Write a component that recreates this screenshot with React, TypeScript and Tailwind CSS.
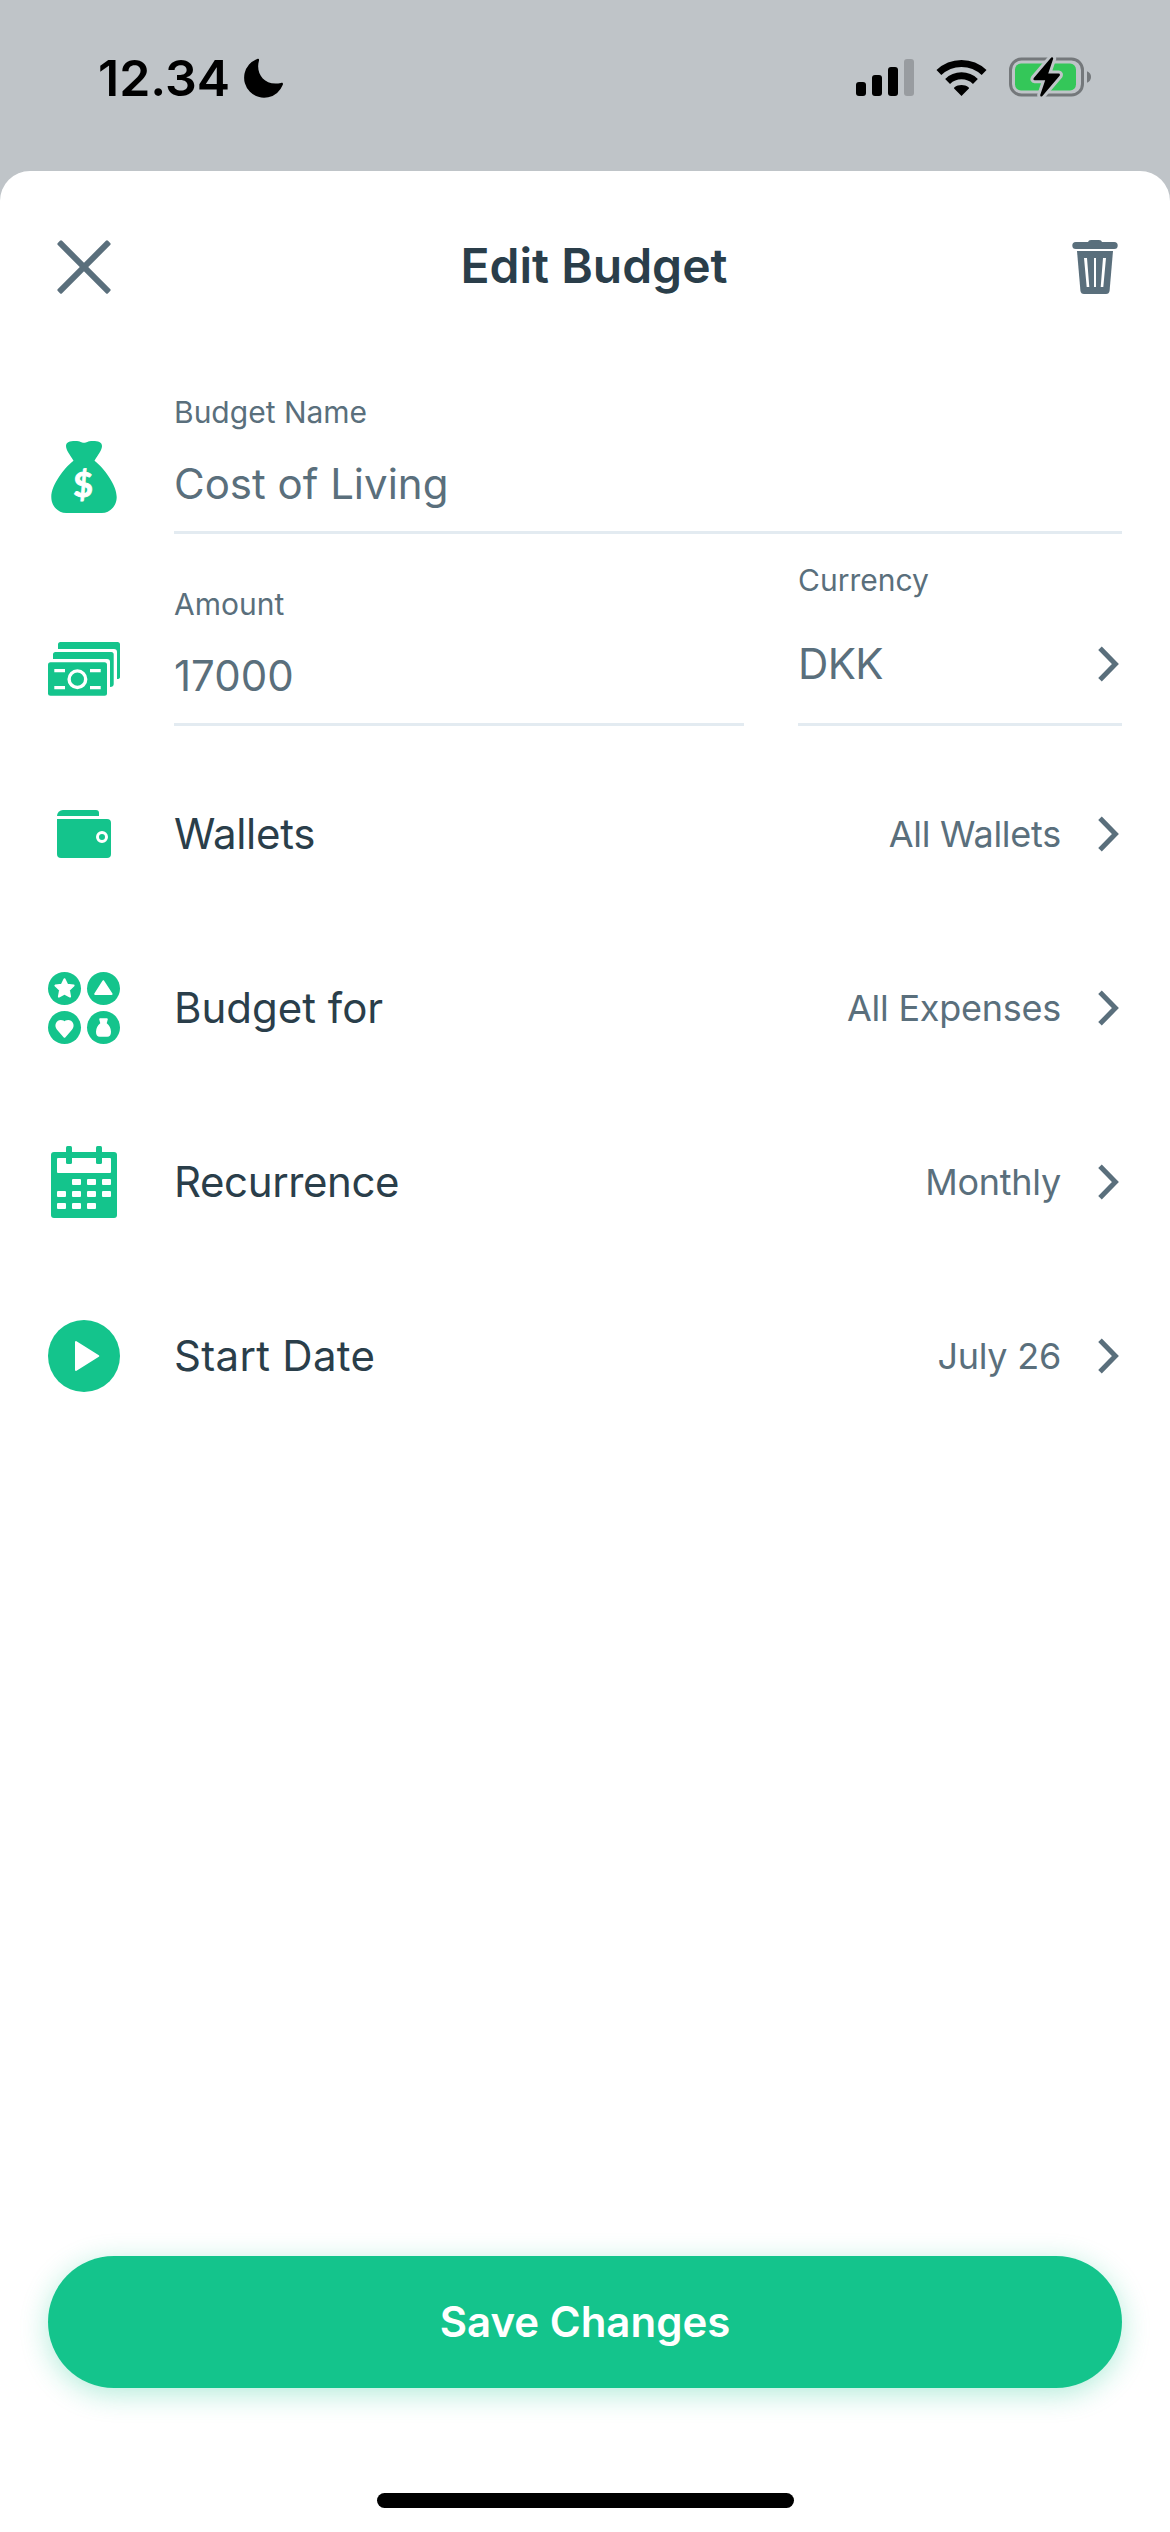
import type { ReactNode } from 'react'

type FieldProps = {
  label: string
  value: string
}

type RowProps = {
  icon: ReactNode
  label: string
  value: string
  labelClass?: string
}

const CELLS = [
  [24, 33], [39, 33], [54, 33],
  [9, 45], [24, 45], [39, 45], [54, 45],
  [9, 57], [24, 57], [39, 57],
]

function MoonIcon() {
  return (
    <svg width="40" height="40" viewBox="0 0 40 40" fill="#000">
      <path d="M13.2 .9C14.6 .4 15.4 1 15 2.4C11.2 15.5 20.5 28.6 37 24.9C38.6 24.5 39.3 25.2 38.8 26.8A20 20 0 1 1 13.2 .9Z" />
    </svg>
  )
}

function SignalIcon() {
  return (
    <svg width="58" height="38" viewBox="0 0 58 38" fill="#000">
      <rect x="0" y="23" width="10" height="14" rx="3" />
      <rect x="16" y="16" width="10" height="21" rx="3" />
      <rect x="32" y="8" width="10" height="29" rx="3" />
      <rect x="48" y="0" width="10" height="37" rx="3" opacity="0.2" />
    </svg>
  )
}

function WifiIcon() {
  return (
    <svg width="51" height="38" viewBox="0 0 51 38" fill="none">
      <path d="M2.9 13.6A32.6 32.6 0 0 1 48.1 13.6" stroke="#000" strokeWidth="7" />
      <path d="M11.6 22.4A20 20 0 0 1 39.4 22.4" stroke="#000" strokeWidth="7" />
      <path d="M25.5 37L18.1 29.6Q17.6 29 18.3 28.5C22.5 25.3 28.5 25.3 32.7 28.5Q33.4 29 32.9 29.6Z" fill="#000" />
    </svg>
  )
}

function BatteryIcon() {
  const bolt = 'M42.2 .6L24.8 21Q23.6 23 25.8 23.2H36.2L31.2 38Q31.2 40.4 33.2 39.2L50.6 18.8Q51.6 16.8 49.6 16.6H39.2L44.2 1.8Q44.2 -.6 42.2 .6Z'
  return (
    <svg width="84" height="40" viewBox="0 0 84 40">
      <rect x="1.5" y="2" width="72" height="36" rx="11" fill="none" stroke="#74787b" strokeWidth="3" />
      <rect x="6" y="6.5" width="61" height="27" rx="6" fill="#34c759" />
      <path d="M78 14.3Q82 16 82 20T78 25.7Z" fill="#74787b" />
      <path d={bolt} fill="#bfc4c8" stroke="#bfc4c8" strokeWidth="6" />
      <path d={bolt} fill="#000" />
    </svg>
  )
}

function CloseIcon() {
  return (
    <svg width="72" height="72" viewBox="0 0 72 72" fill="#5a6f7c">
      <rect x="0.5" y="33" width="71" height="6" rx="1.5" transform="rotate(45 36 36)" />
      <rect x="0.5" y="33" width="71" height="6" rx="1.5" transform="rotate(-45 36 36)" />
    </svg>
  )
}

function TrashIcon() {
  return (
    <svg width="54" height="54" viewBox="0 0 54 54" fill="#5a6f7c">
      <path d="M20 2Q20.5 0 23 0H31Q33.5 0 34 2H46.2A3.5 3.5 0 0 1 46.2 9H7.8A3.5 3.5 0 0 1 7.8 2Z" />
      <path d="M9 11H45L41.6 50.5Q41.2 54 38 54H16Q12.8 54 12.4 50.5Z" />
      <path d="M16 18H19L21.3 47H18.7ZM26 18H28V47H26ZM38 18H35L32.7 47H35.3Z" fill="#fff" />
    </svg>
  )
}

function ChevronIcon() {
  return (
    <svg width="24" height="36" viewBox="0 0 24 36" fill="none" stroke="#5a6f7c" strokeWidth="5">
      <path d="M2 2.2L17.4 18L2 33.8" />
    </svg>
  )
}

function BagIcon() {
  return (
    <svg width="72" height="72" viewBox="0 0 72 72" fill="#14c48c">
      <path d="M25.5 19.7C22 14 18 9 18 5C18 1 22 0 27 0C33 0 33 1.8 36 1.8C39 1.8 39 0 45 0C50 0 54 1 54 5C54 9 50 14 46.5 19.7C56 27 68.7 44 68.7 56C68.7 65 62 72 53.7 72H18.3C10 72 3.3 65 3.3 56C3.3 44 16 27 25.5 19.7Z" />
      <text x="35.1" y="56.4" fontFamily="Lato, sans-serif" fontWeight="700" fontSize="34" textAnchor="middle" fill="#fff" stroke="#fff" strokeWidth="0.9">$</text>
    </svg>
  )
}

function CashIcon() {
  return (
    <svg width="72" height="72" viewBox="0 0 72 72" fill="#14c48c">
      <path d="M10 16V11.5A2.5 2.5 0 0 1 12.5 9H69.5A2.5 2.5 0 0 1 72 11.5V44Q72 46 69 46V19A3 3 0 0 0 66 16Z" />
      <path d="M5 26V21.5A2.5 2.5 0 0 1 7.5 19H63.2A2.5 2.5 0 0 1 65.7 21.5V51.2Q65.7 53.7 62 54V29A3 3 0 0 0 59 26Z" />
      <rect x="0" y="29.3" width="59" height="33.5" rx="2.5" />
      <path d="M6.3 36H17V39.3H6.3ZM42 36H52.7V39.3H42ZM6.3 53H17V56.3H6.3ZM42 53H52.7V56.3H42Z" fill="#fff" />
      <circle cx="29.4" cy="46.2" r="8.3" fill="none" stroke="#fff" strokeWidth="3.4" />
    </svg>
  )
}

function WalletIcon() {
  return (
    <svg width="72" height="72" viewBox="0 0 72 72" fill="#14c48c">
      <path d="M9 18A6 6 0 0 1 15 12H48A3 3 0 0 1 51 15V18Z" />
      <path d="M9 21H59A4 4 0 0 1 63 25V56A4 4 0 0 1 59 60H13A4 4 0 0 1 9 56Z" />
      <circle cx="54" cy="39" r="4.5" fill="none" stroke="#fff" strokeWidth="3" />
    </svg>
  )
}

function CategoriesIcon() {
  return (
    <svg width="72" height="72" viewBox="0 0 72 72" fill="#14c48c">
      <circle cx="16.5" cy="16.5" r="16.5" />
      <circle cx="55.5" cy="16.5" r="16.5" />
      <circle cx="16.5" cy="55.5" r="16.5" />
      <circle cx="55.5" cy="55.5" r="16.5" />
      <g fill="#fff" stroke="#fff" strokeWidth="2" strokeLinejoin="round">
        <path d="M16.5 7.2L19.2 12.8L25.6 13.6L20.9 18L22.1 24.6L16.5 21.7L10.9 24.6L12.1 18L7.4 13.6L13.8 12.8Z" />
        <path d="M55.3 9.2L63.6 22H47.2Z" />
        <path d="M16.5 64.8L9.8 57.2C6.6 53 9.6 49 12.8 49Q15.4 49 16.5 50.8Q17.6 49 20.2 49C23.4 49 26.4 53 23.2 57.2Z" />
        <path d="M53.4 51.6L52.2 47.2H58.8L57.6 51.6C60 53.6 62 57 62 59.8Q62 63.8 59.2 63.8H51.8Q49 63.8 49 59.8C49 57 51 53.6 53.4 51.6Z" />
      </g>
    </svg>
  )
}

function CalendarIcon() {
  return (
    <svg width="72" height="72" viewBox="0 0 72 72" fill="#14c48c">
      <rect x="3" y="6" width="66" height="66" rx="3" />
      <rect x="9" y="12" width="54" height="15" rx="1" fill="#fff" />
      <rect x="18" y="0" width="6" height="18" rx="1.5" />
      <rect x="48" y="0" width="6" height="18" rx="1.5" />
      {CELLS.map(([x, y]) => (
        <rect key={`${x}-${y}`} x={x} y={y} width="9" height="6" rx="1" fill="#fff" />
      ))}
    </svg>
  )
}

function PlayIcon() {
  return (
    <svg width="72" height="72" viewBox="0 0 72 72" fill="#14c48c">
      <circle cx="36" cy="36" r="36" />
      <path d="M28 22V50L50.3 36Z" fill="#fff" stroke="#fff" strokeWidth="2" strokeLinejoin="round" />
    </svg>
  )
}

function StatusBar() {
  return (
    <div className="flex h-[171px] shrink-0 items-start justify-between pl-[98px] pr-[77px] pt-[48px]">
      <div className="flex items-start">
        <span className="text-[50px] leading-[60px] font-semibold text-black">12.34</span>
        <div className="ml-3.5 pt-[10px]">
          <MoonIcon />
        </div>
      </div>
      <div className="flex items-start pt-[9px]">
        <div className="pt-0.5">
          <SignalIcon />
        </div>
        <div className="ml-[22px] pt-0.5">
          <WifiIcon />
        </div>
        <div className="ml-[22px]">
          <BatteryIcon />
        </div>
      </div>
    </div>
  )
}

function Field({ label, value }: FieldProps) {
  return (
    <label className="flex flex-1 flex-col border-b-3 border-[#e3ebf1] pb-[22px]">
      <span className="text-[30px] leading-9">{label}</span>
      <input
        type="text"
        defaultValue={value}
        className="mt-[29px] h-[50px] w-full bg-transparent text-[42px] leading-[50px] outline-none"
      />
    </label>
  )
}

function Row({ icon, label, value, labelClass = '' }: RowProps) {
  return (
    <button type="button" className="flex h-[174px] w-full items-center text-left">
      {icon}
      <span className={`ml-[54px] flex-1 text-[42px] leading-[50px] text-[#2a3e4a] ${labelClass}`}>{label}</span>
      <span className="mr-[37px] text-[36px] leading-[44px] tracking-[-0.25px]">{value}</span>
      <ChevronIcon />
    </button>
  )
}

export default function App() {
  return (
    <div className="flex h-[2532px] w-[1170px] flex-col bg-[#bfc4c8] font-['Inter',sans-serif] text-[#5a6f7c]">
      <StatusBar />

      <main className="flex flex-1 flex-col rounded-t-[30px] bg-white px-12">
        <header className="flex h-[192px] items-center justify-between">
          <button type="button" aria-label="Close">
            <CloseIcon />
          </button>
          <h1 className="pb-[3px] text-[48px] leading-[58px] font-semibold text-[#2a3e4a]">Edit Budget</h1>
          <button type="button" aria-label="Delete">
            <TrashIcon />
          </button>
        </header>

        <div className="mt-[31px] flex items-end">
          <div className="mr-[54px] mb-[21px]">
            <BagIcon />
          </div>
          <Field label="Budget Name" value="Cost of Living" />
        </div>

        <div className="mt-7 flex items-end">
          <div className="mr-[54px] mb-[21px]">
            <CashIcon />
          </div>
          <Field label="Amount" value="17000" />
          <div className="ml-[54px] w-[324px] border-b-3 border-[#e3ebf1] pb-[34px]">
            <div className="text-[30px] leading-9">Currency</div>
            <button type="button" className="mt-[41px] flex h-[50px] w-full items-center justify-between">
              <span className="text-[42px] leading-[50px] tracking-[-0.6px]">DKK</span>
              <ChevronIcon />
            </button>
          </div>
        </div>

        <div className="mt-[21px] flex flex-col">
          <Row icon={<WalletIcon />} label="Wallets" value="All Wallets" labelClass="tracking-[-0.3px]" />
          <Row icon={<CategoriesIcon />} label="Budget for" value="All Expenses" />
          <Row icon={<CalendarIcon />} label="Recurrence" value="Monthly" labelClass="tracking-[-0.4px]" />
          <Row icon={<PlayIcon />} label="Start Date" value="July 26" labelClass="tracking-[0.3px]" />
        </div>

        <div className="mt-auto flex flex-col items-center pb-6">
          <button
            type="button"
            className="h-[132px] w-full rounded-full bg-[#14c48c] pb-px text-[42px] font-semibold text-white shadow-[0_6px_28px_rgba(20,196,140,0.32)]"
          >
            Save Changes
          </button>
          <div className="mt-[105px] h-[15px] w-[417px] rounded-full bg-black" />
        </div>
      </main>
    </div>
  )
}
